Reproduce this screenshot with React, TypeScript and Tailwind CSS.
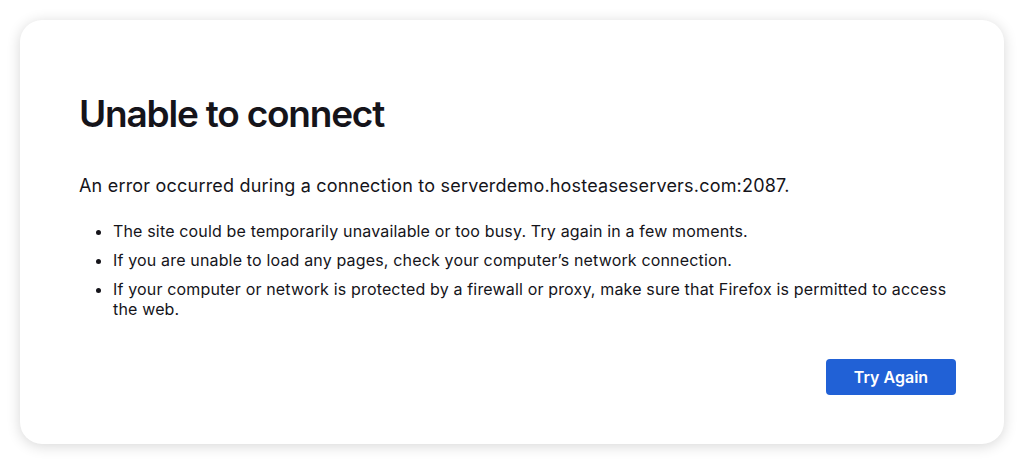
export default function App() {
  return (
    <div className="w-[1024px] h-[465px] bg-white p-5" style={{ fontFamily: "Inter, 'Noto Sans', sans-serif" }}>
      <div className="h-[424px] rounded-[22px] bg-white shadow-[0_2px_14px_rgba(0,0,0,0.16)] pl-[59px] pr-[48px] pt-[72px] flex flex-col text-[#15141a]">
        <h1 className="text-[37px] leading-[44px] font-semibold tracking-[-1.2px]">Unable to connect</h1>
        <p className="mt-[37px] text-[18px] leading-[26px] tracking-[0.2px]">An error occurred during a connection to serverdemo.hosteaseservers.com:2087.</p>
        <ul className="mt-[22px] list-disc pl-[34px] text-[16px] leading-[20px] tracking-[0.16px] flex flex-col gap-[9px]">
          <li>The site could be temporarily unavailable or too busy. Try again in a few moments.</li>
          <li>If you are unable to load any pages, check your computer’s network connection.</li>
          <li>If your computer or network is protected by a firewall or proxy, make sure that Firefox is permitted to access the web.</li>
        </ul>
        <div className="mt-[40px] flex justify-end">
          <button className="w-[130px] h-[36px] rounded-[4px] bg-[#2161d6] text-white text-[16px] font-semibold">Try Again</button>
        </div>
      </div>
    </div>
  );
}
